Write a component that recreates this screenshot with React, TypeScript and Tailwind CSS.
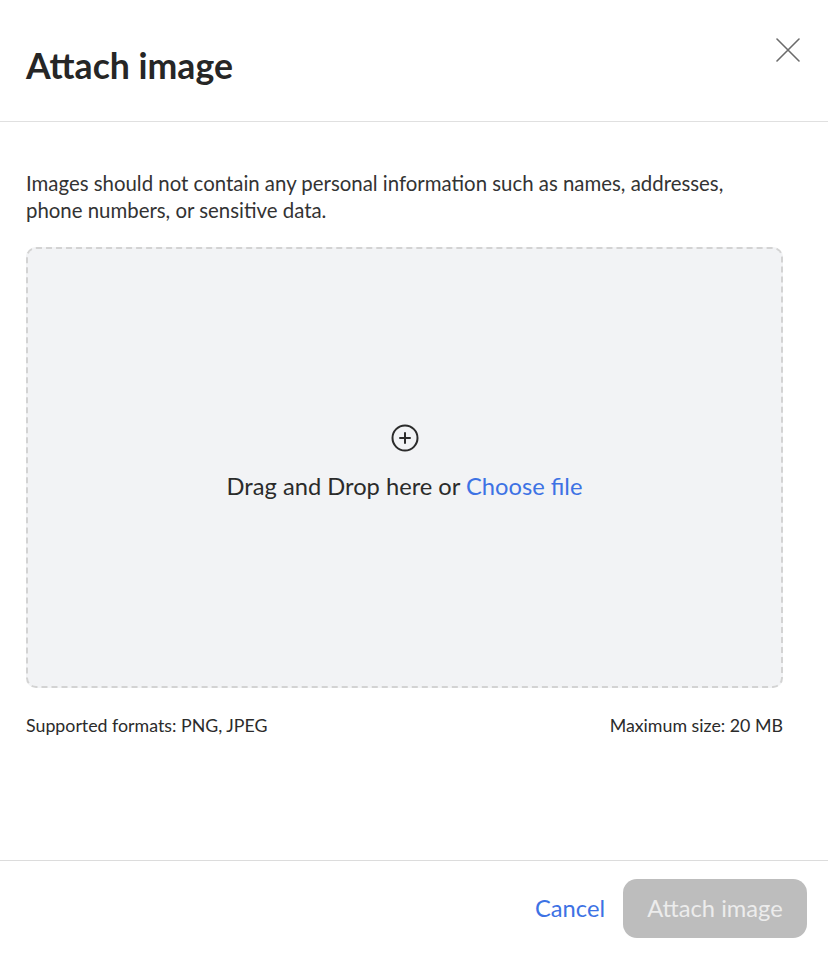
import React from "react";

const font = { fontFamily: "Lato, 'Noto Sans', sans-serif" };

function CloseIcon() {
  return (
    <svg width="24" height="24" viewBox="0 0 24 24" fill="none" stroke="#6b6b6b" strokeWidth="1.6" strokeLinecap="round">
      <path d="M1 1 L23 23 M23 1 L1 23" />
    </svg>
  );
}

function PlusCircle() {
  return (
    <svg width="28" height="28" viewBox="0 0 28 28" fill="none" stroke="#2b2b2b" strokeWidth="2" strokeLinecap="round">
      <circle cx="14" cy="14" r="12.5" />
      <path d="M14 9 V19 M9 14 H19" />
    </svg>
  );
}

export default function App() {
  return (
    <div className="w-[828px] h-[966px] bg-white flex flex-col text-[#2b2b2b]" style={font}>
      {/* header */}
      <div className="h-[122px] shrink-0 border-b border-[#e0e0e0] flex justify-between pl-[26px] pr-[28px]">
        <h1 className="mt-[44px] text-[35.6px] leading-[44px] font-bold text-[#262626]">Attach image</h1>
        <button className="mt-[38px] h-[24px] w-[24px]">
          <CloseIcon />
        </button>
      </div>

      {/* body */}
      <div className="flex-1 pl-[26px] pr-[45px] pt-[48px]">
        <p className="text-[20.4px] leading-[27px] text-[#333]">
          Images should not contain any personal information such as names, addresses,
          <br />
          phone numbers, or sensitive data.
        </p>
        <div className="mt-[23px] h-[441px] rounded-[10px] border-2 border-dashed border-[#d3d3d3] bg-[#f2f3f5] flex flex-col items-center justify-center gap-[19px] pb-[10px]">
          <PlusCircle />
          <p className="text-[23.7px] leading-[30px] text-[#2b2b2b]">
            Drag and Drop here or <span className="text-[#3d72e4] cursor-pointer">Choose file</span>
          </p>
        </div>
        <div className="mt-[25px] flex justify-between text-[17.8px] leading-[24px] text-[#2b2b2b]">
          <span>Supported formats: PNG, JPEG</span>
          <span>Maximum size: 20 MB</span>
        </div>
      </div>

      {/* footer */}
      <div className="h-[106px] shrink-0 border-t border-[#dcdcdc] flex justify-end items-start gap-[18px] pr-[21px] pt-[18px]">
        <button className="mt-[14px] text-[23.7px] leading-[30px] text-[#3d72e4]">Cancel</button>
        <button className="h-[59px] w-[184px] rounded-[14px] bg-[#bdbdbd] text-[23.7px] text-[#ececec]">
          Attach image
        </button>
      </div>
    </div>
  );
}
